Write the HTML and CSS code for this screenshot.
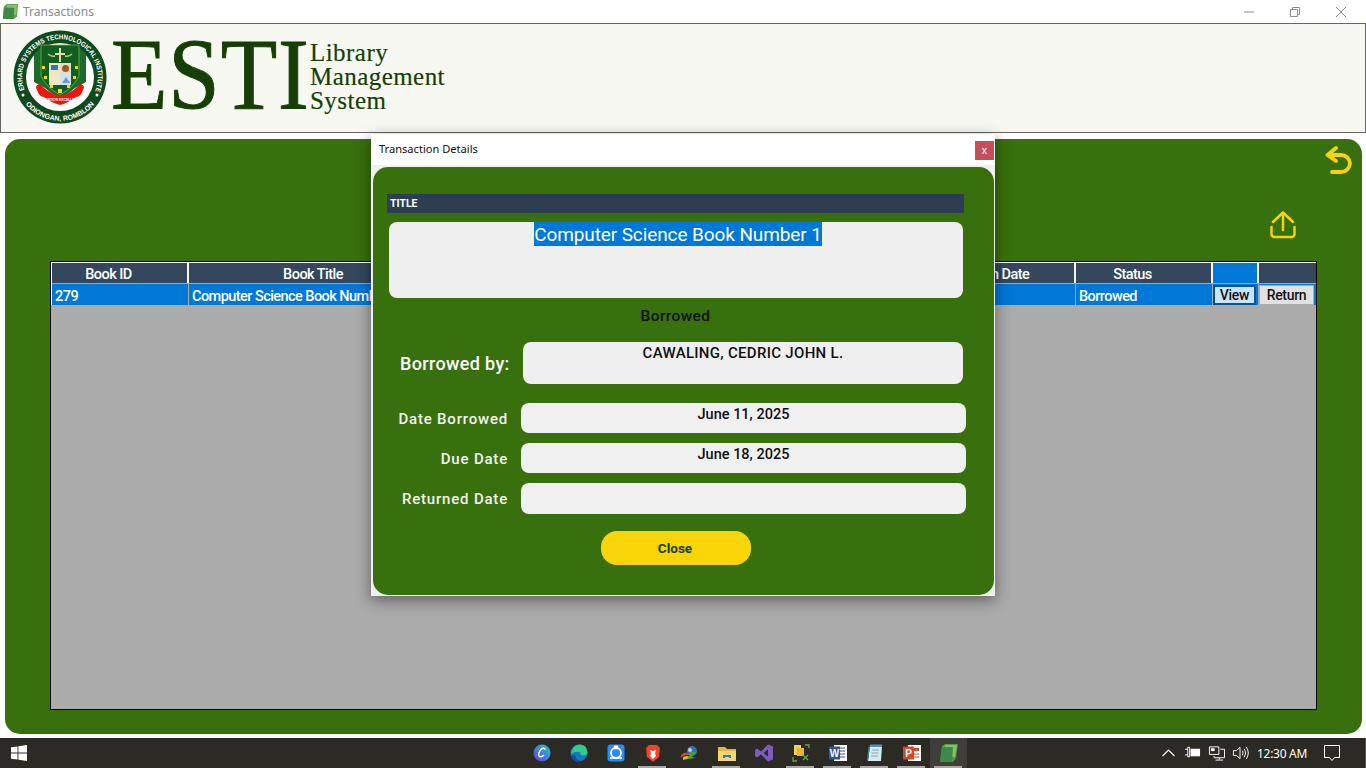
FILE: index.html
```html
<!DOCTYPE html>
<html lang="en">
<head>
<meta charset="utf-8">
<title>Transactions</title>
<link rel="stylesheet" href="styles.css">
</head>
<body>
<div class="app">
  <div class="titlebar">
    <svg class="app-icon" viewBox="0 0 18 18"><path d="M2 4 5 1h12l-1 13-3 3H1z" fill="#5aa24e"/><path d="M5.500 2h10.500l-1 11H5z" fill="#86c06a"/><path d="M2 5h11l-.5 12H1z" fill="#3d8a48"/></svg>
    <span class="win-title">Transactions</span>
    <div class="win-controls">
      <svg class="wc" viewBox="0 0 46 20"><path d="M18 10h10" stroke="#8a8a8a" fill="none"/></svg>
      <svg class="wc" viewBox="0 0 46 20"><path d="M18.500 7.500h7v7h-7zM20.500 7V5.500h7v7H26" stroke="#8a8a8a" fill="none"/></svg>
      <svg class="wc" viewBox="0 0 46 20"><path d="M18 5l10 10M28 5 18 15" stroke="#8a8a8a" fill="none"/></svg>
    </div>
  </div>

  <header class="brand">
    <svg class="crest" viewBox="0 0 94 94">
      <defs>
        <path id="arcTop" d="M11.500 60A37.800 37.800 0 1 1 82.500 60"/>
        <path id="arcBot" d="M12 73.500A44 44 0 0 0 82 73.500"/>
      </defs>
      <circle cx="47" cy="47" r="46.500" fill="#0f4a1f"/>
      <circle cx="47" cy="47" r="34" fill="#fff"/>
      <text class="crest-text"><textPath href="#arcTop" textLength="146" lengthAdjust="spacingAndGlyphs">ERHARD SYSTEMS TECHNOLOGICAL INSTITUTE</textPath></text>
      <text class="crest-text"><textPath href="#arcBot" startOffset="50%" text-anchor="middle">ODIONGAN, ROMBLON</textPath></text>
      <circle cx="10" cy="65" r="1.500" fill="#fff"/>
      <circle cx="84" cy="65" r="1.500" fill="#fff"/>
      <path d="M21 24 28 17H66L73 24V52L62 58 47 70 32 58 21 52Z" fill="#1d6a2a"/>
      <path d="M28 15H66V46Q60 58 47 65 34 58 28 46Z" fill="#115f20" stroke="#7cc04a" stroke-width=".7"/>
      <path d="M46 18h2v5h4v2h-4v7h-2v-7h-4v-2h4z" fill="#e8d9a0"/>
      <path d="M35 24q3 3 7 2M59 24q-3 3-7 2" stroke="#c9c48a" stroke-width="1.300" fill="none"/>
      <rect x="36" y="33" width="11" height="11" fill="#e9e6cf"/>
      <rect x="47" y="33" width="11" height="11" fill="#e9dcc0"/>
      <rect x="36" y="44" width="11" height="11" fill="#efe8c4"/>
      <rect x="47" y="44" width="11" height="11" fill="#cfe3ea"/>
      <rect x="38" y="35" width="7" height="5" fill="#3f6fb5"/>
      <circle cx="52.500" cy="38.500" r="3.500" fill="#a4552a"/>
      <path d="M49 53l4-6 4 6z" fill="#6a9bc9"/>
      <path d="M29 36h3v3h-3zM62 36h3v3h-3zM31 46h3v3h-3zM60 46h3v3h-3zM37 55h3v3h-3zM54 55h3v3h-3zM45 59h4v4h-4z" fill="#f5d90a"/>
      <path d="M24 60q-3-5 3-6l3 3q6 6 17 9 11-3 17-9l3-3q6 1 3 6-2 7-7 7-8 6-16 8-8-2-16-8-5 0-7-7z" fill="#e8170f"/>
      <text class="crest-motto" x="47" y="70.500" text-anchor="middle">EDUCATION EXCELLENCE</text>
    </svg>
    <div class="wordmark">ESTI</div>
    <div class="subtitle">
      <span>Library</span>
      <span>Management</span>
      <span>System</span>
    </div>
  </header>

  <main class="panel">
    <svg class="back-icon" viewBox="0 0 28 30"><path d="M11 3 2.500 10 11 16M3 10h13a9 9 0 0 1 9 8.500 9 9 0 0 1-9 8.500H7" fill="none" stroke="#f6d40a" stroke-width="3.800" stroke-linecap="round" stroke-linejoin="round"/></svg>
    <svg class="upload-icon" viewBox="0 0 26 28"><path d="M13 19V2M3 11 13 1.500 23 11M1.500 16v7a3 3 0 0 0 3 3h17a3 3 0 0 0 3-3v-7" fill="none" stroke="#f6d40a" stroke-width="2.500" stroke-linecap="round" stroke-linejoin="round"/></svg>
    <section class="grid">
      <div class="grid-inner">
        <div class="row head">
          <div class="cell">Book ID</div>
          <div class="cell">Book Title</div>
          <div class="cell">Borrowed By</div>
          <div class="cell">Date Borrowed</div>
          <div class="cell">Due Date</div>
          <div class="cell">Return Date</div>
          <div class="cell">Status</div>
          <div class="cell sel"></div>
          <div class="cell"></div>
        </div>
        <div class="row body-row">
          <div class="cell">279</div>
          <div class="cell">Computer Science Book Number 1</div>
          <div class="cell">CAWALING, CEDRIC JOHN L.</div>
          <div class="cell">June 11, 2025</div>
          <div class="cell">June 18, 2025</div>
          <div class="cell"></div>
          <div class="cell">Borrowed</div>
          <div class="cell btn-cell"><button class="mini view">View</button></div>
          <div class="cell btn-cell"><button class="mini">Return</button></div>
        </div>
      </div>
    </section>
  </main>

  <footer class="taskbar">
    <svg class="start" viewBox="0 0 16 16"><path d="M0 2.300 6.500 1.400V7.500H0zM7.400 1.300 16 0V7.500H7.400zM0 8.400H6.500V14.600L0 13.700zM7.400 8.400H16V16L7.400 14.700z" fill="#fff"/></svg>
    <div class="task-icons">
      <div class="task"><svg viewBox="0 0 20 20"><defs><linearGradient id="cv" x1="0" y1="1" x2="1" y2="0"><stop offset="0" stop-color="#6a3fd0"/><stop offset="1" stop-color="#1fc6d8"/></linearGradient></defs><circle cx="10" cy="10" r="8.500" fill="url(#cv)"/><path d="M13.500 6.500Q11.500 4 9 6.500 6 10 7 13q2 2 5-1" stroke="#fff" stroke-width="1.400" fill="none"/></svg></div>
      <div class="task"><svg viewBox="0 0 20 20"><circle cx="10" cy="10" r="8.500" fill="#1578c9"/><path d="M2 11Q3 2 11 1.500q7 .5 7.500 8 0 3-4 3-4 0-3-3-5-2-9.500 1.500z" fill="#37c98a"/><path d="M6 12q1 6 7 6-8 3-11-5z" fill="#0f4f94"/></svg></div>
      <div class="task"><svg viewBox="0 0 20 20"><rect x="1.500" y="1.500" width="17" height="17" rx="3" fill="#2a8cf0"/><circle cx="10" cy="10" r="5" fill="none" stroke="#fff" stroke-width="1.800"/><path d="M8 2.500h4v3H8z" fill="#fff"/><path d="M4 15h12" stroke="#fff" stroke-width="1.500"/></svg></div>
      <div class="task under"><svg viewBox="0 0 20 20"><path d="M6 2h8l3 3-1 9-6 5-6-5-1-9z" fill="#f0452a"/><path d="M7 7l3 1 3-1-1 4 1 2-3 3-3-3 1-2z" fill="#fff"/></svg></div>
      <div class="task"><svg viewBox="0 0 20 20"><circle cx="12" cy="8" r="5" fill="#3d6db5"/><circle cx="10" cy="7" r="2" fill="#b9d3ee"/><path d="M1 12q5-5 9 0H6q-3 0-5 3z" fill="#d94a2a"/><path d="M3 14q4-2 7 0-3 3-7 3z" fill="#e7b428"/><path d="M10 9h6l-4 5 4 1-8 1z" fill="#3fa535"/></svg></div>
      <div class="task under split"><svg viewBox="0 0 20 20"><path d="M1 4h7l2 2h9v12H1z" fill="#e8b33a"/><path d="M1 8h18v10H1z" fill="#f7d774"/><path d="M6 12h8v3h-2v-1H8v1H6z" fill="#2a78c9"/></svg></div>
      <div class="task"><svg viewBox="0 0 20 20"><path d="M14 1.500 7 8.500 3 5.500 1 7v6l2 1.500 4-3 7 7 5-2V3.500zM14 6.500v7L9.500 10z" fill="#7c5cc0"/></svg></div>
      <div class="task under"><svg viewBox="0 0 20 20"><rect x="3" y="2" width="7" height="10" fill="#f0cf5a"/><rect x="6" y="5" width="7" height="8" fill="#e8b33a"/><path d="M14 2h4v3M2 14v4h4M12 12l5 5M17 12l-5 5" stroke="#4fae5a" stroke-width="1.300" fill="none"/></svg></div>
      <div class="task under split"><svg viewBox="0 0 20 20"><rect x="6" y="2" width="13" height="16" fill="#fff"/><path d="M12 5h5M12 8h5M12 11h5M12 14h5" stroke="#2b579a"/><rect x="1" y="3.500" width="11" height="13" fill="#2b579a"/><text class="ico-letter" x="6.500" y="13.500" text-anchor="middle">W</text></svg></div>
      <div class="task under"><svg viewBox="0 0 20 20"><path d="M5 3h12l-1 15H3z" fill="#d6ecf2"/><path d="M7 7h7M6.500 10h7M6 13h7" stroke="#8aa5b3"/><path d="M5 1.500h12V4H5z" fill="#5d8fb0"/><path d="M3 18 5 3 3.500 4 2 17z" fill="#3a8790"/></svg></div>
      <div class="task under"><svg viewBox="0 0 20 20"><rect x="6" y="2" width="13" height="16" fill="#fff"/><rect x="11" y="5" width="6" height="3" fill="#d24726"/><path d="M12 11h5M12 14h5" stroke="#d24726"/><rect x="1" y="3.500" width="11" height="13" fill="#d24726"/><text class="ico-letter" x="6.500" y="13.500" text-anchor="middle">P</text></svg></div>
      <div class="task active under"><svg viewBox="0 0 20 20"><path d="M3 3 6 1h13l-2 14-3 4H1z" fill="#4f9a4a"/><path d="M6 2h12l-2 12H4z" fill="#86c06a"/><path d="M3 4h11l-1 15H1z" fill="#3e8a4a"/></svg></div>
    </div>
    <div class="tray">
      <svg class="tray-ico" viewBox="0 0 16 16"><path d="M2 11 8 5l6 6" fill="none" stroke="#fff" stroke-width="1.100"/></svg>
      <svg class="tray-ico" viewBox="0 0 18 16"><path d="M1 4h3M1 10h3M4 2h2v10H4zM6 7h1" stroke="#fff" fill="none"/><rect x="7" y="3.500" width="10" height="8" fill="#fff"/></svg>
      <svg class="tray-ico" viewBox="0 0 18 16"><path d="M1.500 1.500h10v8h-10zM13 4h4.500v9h-11v-2M12 13v2M8 15.500h8" fill="none" stroke="#fff"/><rect x="3" y="3" width="4" height="3" fill="#fff"/></svg>
      <svg class="tray-ico" viewBox="0 0 18 16"><path d="M1.500 5.500h3l4-3.500v12l-4-3.500h-3zM11 5.500q1.500 2.500 0 5M13 3.500q3 4.500 0 9M15 1.500q4.500 6.500 0 13" fill="none" stroke="#fff"/></svg>
      <span class="clock">12:30 AM</span>
      <svg class="notify" viewBox="0 0 18 18"><path d="M1.500 1.500h15v12h-5l-2.500 3-2.500-3h-5z" fill="none" stroke="#fff"/></svg>
    </div>
  </footer>
</div>

<div class="dialog">
  <div class="dialog-bar">
    <span class="dialog-title">Transaction Details</span>
    <button class="dialog-x">x</button>
  </div>
  <div class="dialog-body">
    <div class="title-strip">TITLE</div>
    <div class="title-box"><span class="selected">Computer Science Book Number 1</span></div>
    <div class="status">Borrowed</div>
    <div class="by-row">
      <label class="by-label">Borrowed by:</label>
      <div class="by-box">CAWALING, CEDRIC JOHN L.</div>
    </div>
    <div class="dates">
      <label class="date-label">Date Borrowed</label>
      <div class="date-box">June 11, 2025</div>
      <label class="date-label">Due Date</label>
      <div class="date-box">June 18, 2025</div>
      <label class="date-label">Returned Date</label>
      <div class="date-box tall"></div>
    </div>
    <button class="close-btn">Close</button>
  </div>
</div>
</body>
</html>
```
FILE: styles.css
```css
* { box-sizing: border-box; }
html, body { margin: 0; padding: 0; }
body { width: 1366px; height: 768px; overflow: hidden; background: #fff; font-family: Roboto, "Liberation Sans", sans-serif; }

.app { width: 1366px; height: 768px; display: flex; flex-direction: column; position: relative; }

.titlebar { height: 23px; display: flex; align-items: center; background: #fff; padding-left: 2px; flex: none; }
.app-icon { width: 17px; height: 17px; }
.win-title { margin-left: 4px; font: 12px "Noto Sans", "Open Sans", sans-serif; color: #8a8a8a; }
.win-controls { margin-left: auto; display: flex; gap: 0; padding-right: 2px; }
.wc { width: 46px; height: 20px; display: block; }

.brand { height: 110px; flex: none; display: flex; align-items: center; background: #f8f8f3; border: 1px solid #666; padding-left: 12px; }
.crest { width: 94px; height: 94px; flex: none; margin-top: -2px; }
.crest-text { font: bold 7px "Liberation Sans", sans-serif; fill: #fff; }
.crest-motto { font: bold 3.400px "Liberation Sans", sans-serif; fill: #fff; }
.ico-letter { font: bold 10px "Liberation Sans", sans-serif; fill: #fff; }

.wordmark { margin-left: 4px; margin-top: -6px; font: 101px/1 "Liberation Serif", serif; color: #153f04; -webkit-text-stroke: 1px #153f04; width: 198px; transform: scaleX(.915); transform-origin: left center; letter-spacing: 1px; white-space: nowrap; }
.subtitle { display: flex; flex-direction: column; margin-left: 1px; margin-top: -3px; font: 25px/24px "Liberation Serif", serif; letter-spacing: .45px; color: #153f04; -webkit-text-stroke: .2px #153f04; }

.panel { margin: 6px 4px 0 5px; height: 595px; flex: none; background: #38700d; border-radius: 15px; display: flex; flex-direction: column; }
.back-icon { width: 28px; height: 30px; align-self: flex-end; margin: 6px 9px 0 0; flex: none; }
.upload-icon { width: 26px; height: 28px; align-self: flex-end; margin: 36px 66px 0 0; flex: none; }
.grid { margin: 22px 45px 24px 45px; flex: 1; background: #ababab; border: 1px solid #000; }
.grid-inner { border-top: 1px solid #fff; border-left: 1px solid #fff; }

.row { display: grid; grid-template-columns: 137px 272px 158px 158px 159px 140px 137px 46px 55px; color: #fff; font-size: 14.500px; font-weight: 500; letter-spacing: -.55px; line-height: 20px; }
.row .cell { white-space: nowrap; overflow: hidden; padding-top: 2px; }
.head { height: 21px; background: #34475c; border-bottom: 1px solid #a6a6a6; }
.head .cell { text-align: center; padding-right: 22px; border-right: 2px solid #f4f4f4; }
.head .cell:last-child { border-right: 0; }
.head .sel { background: #0078d7; }
.body-row { height: 21px; background: #0078d7; }
.body-row .cell { padding-left: 3px; padding-top: 3px; border-right: 1px solid #a6a6a6; }
.body-row .btn-cell { padding: 1px 0 0; }
.body-row .cell:last-child { border-right: 0; }
.mini { display: block; width: 43px; height: 20px; padding: 0; background: #e1e1e1; border: 1px solid #adadad; font: 500 14px/16px Roboto, sans-serif; letter-spacing: -.3px; color: #111; }
.btn-cell:last-child .mini { width: 55px; }
.mini.view { background: #cce4f7; border: 2px solid #005499; }

.taskbar { margin-top: 4px; height: 30px; flex: 1; background: #2b2a24; display: flex; align-items: center; position: relative; }
.start { width: 16px; height: 16px; margin-left: 11px; }
.task-icons { margin-left: 496px; display: flex; }
.task { width: 37px; height: 30px; display: flex; align-items: center; justify-content: center; position: relative; }
.task svg { width: 20px; height: 20px; }
.task.under::after { content: ""; position: absolute; left: 4px; right: 5px; bottom: 0; height: 2px; background: #a9a8a4; }
.task.active { background: #3f3e39; }
.tray { margin-left: auto; display: flex; align-items: center; height: 30px; padding-right: 5px; border-right: 1px solid #55544f; }
.tray-ico { width: 17px; height: 16px; margin-right: 7px; }
.clock { margin-left: 1px; font: 12px "Noto Sans", "Open Sans", sans-serif; letter-spacing: -.3px; color: #fff; white-space: nowrap; }
.notify { width: 18px; height: 18px; margin: 0 19px 0 16px; }

.dialog { position: absolute; left: 371px; top: 134px; width: 624px; height: 462px; background: #f0f0f0; box-shadow: 0 4px 14px rgba(0,0,0,.45); display: flex; flex-direction: column; }
.dialog-bar { height: 31px; flex: none; background: #fff; display: flex; align-items: center; padding: 0 1px 2px 8px; justify-content: space-between; }
.dialog-title { font: 11.100px "Noto Sans", "Open Sans", sans-serif; color: #111; }
.dialog-x { width: 19px; height: 19px; padding: 0; border: 0; background: #c4505a; color: #fff; font: 10px "Noto Sans", sans-serif; margin-top: 3px; }
.dialog-body { margin: 2px 1px 1px 2px; flex: 1; background: #38700d; border-radius: 15px; display: flex; flex-direction: column; padding: 27px 0 0 14px; letter-spacing: .4px; }

.title-strip { width: 577px; height: 19px; background: #2c3e50; color: #fff; font-size: 10.500px; font-weight: 700; line-height: 19px; padding-left: 3px; letter-spacing: 0; }
.title-box { margin: 9px 0 0 2px; width: 574px; height: 76px; padding-left: 4px; background: #efefef; border-radius: 8px; text-align: center; font-size: 19px; line-height: 23px; letter-spacing: -.1px; }
.selected { background: #0078d7; color: #fff; display: inline-block; padding-top: 1px; }
.status { margin-top: 9px; width: 577px; text-align: center; font-size: 15.500px; font-weight: 500; line-height: 18px; color: #111; }
.by-row { margin-top: 17px; display: flex; align-items: center; }
.by-label { width: 123px; margin-left: 13px; padding-top: 2px; font-size: 18px; font-weight: 500; letter-spacing: .35px; white-space: nowrap; color: #fff; line-height: 22px; }
.by-box { width: 440px; height: 42px; padding-top: 1px; background: #efefef; border-radius: 8px; text-align: center; font-size: 15px; font-weight: 500; letter-spacing: .3px; line-height: 21px; color: #111; }
.dates { margin: 19px 0 0 -14px; display: grid; grid-template-columns: 135px 445px; column-gap: 13px; row-gap: 10px; align-items: center; }
.date-label { text-align: right; padding-top: 1px; font-size: 15px; font-weight: 500; letter-spacing: .8px; color: #f4f4f4; line-height: 28px; }
.date-box { height: 30px; background: #f0f0f0; border-radius: 8px; text-align: center; font-size: 14.500px; font-weight: 500; letter-spacing: 0; line-height: 23px; color: #111; }
.date-box.tall { height: 31px; }
.close-btn { margin: 17px 0 0 214px; width: 150px; height: 34px; padding: 0 2px 0 0; border: 0; border-radius: 16px; background: #f9d408; color: #153f04; font: 700 13.500px Roboto, sans-serif; }
```
